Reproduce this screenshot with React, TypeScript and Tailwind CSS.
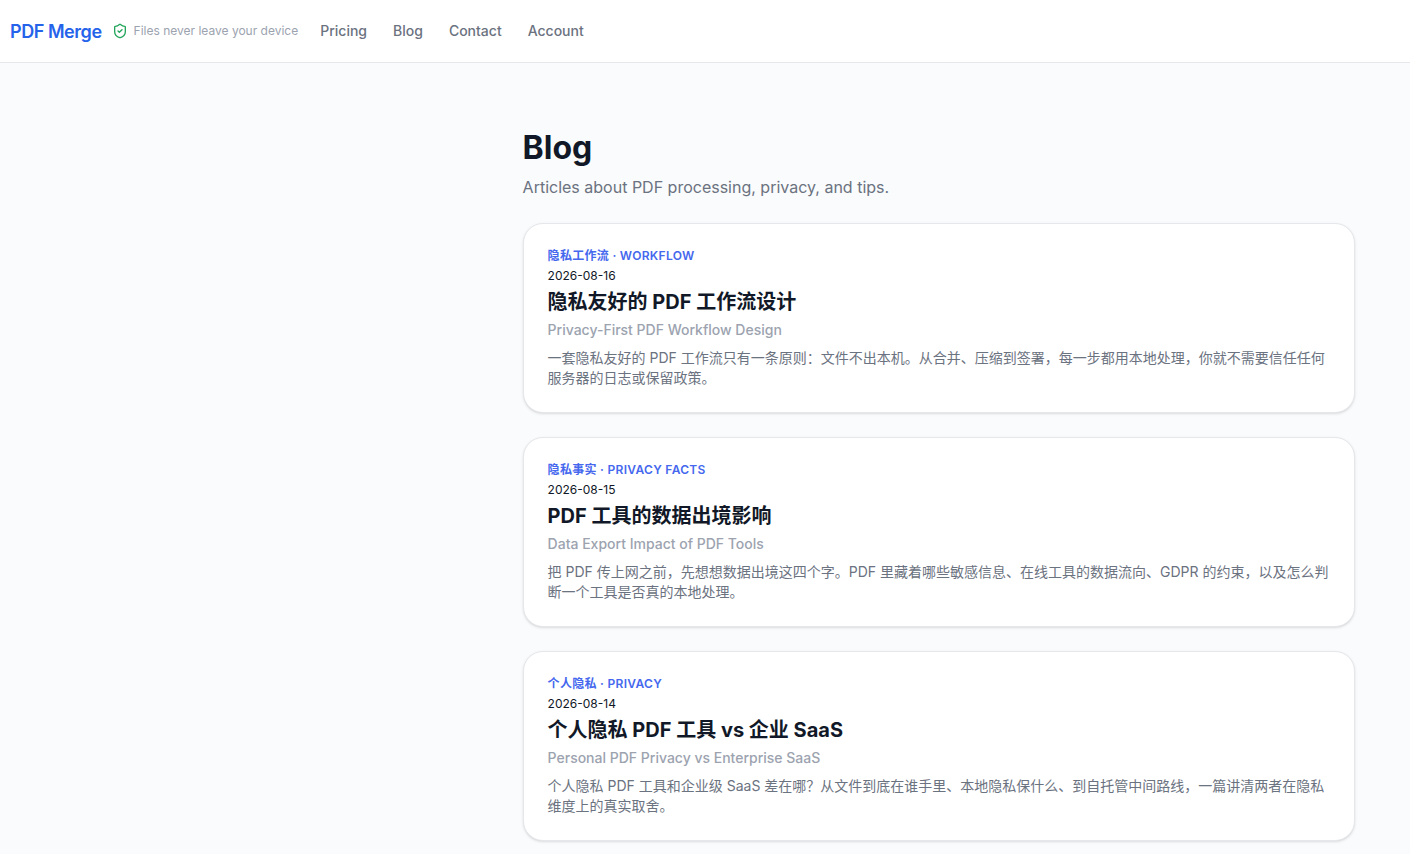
const posts = [
  {
    tag: "隐私工作流 · WORKFLOW",
    date: "2026-08-16",
    title: "隐私友好的 PDF 工作流设计",
    sub: "Privacy-First PDF Workflow Design",
    body: "一套隐私友好的 PDF 工作流只有一条原则：文件不出本机。从合并、压缩到签署，每一步都用本地处理，你就不需要信任任何服务器的日志或保留政策。",
  },
  {
    tag: "隐私事实 · PRIVACY FACTS",
    date: "2026-08-15",
    title: "PDF 工具的数据出境影响",
    sub: "Data Export Impact of PDF Tools",
    body: "把 PDF 传上网之前，先想想数据出境这四个字。PDF 里藏着哪些敏感信息、在线工具的数据流向、GDPR 的约束，以及怎么判断一个工具是否真的本地处理。",
  },
  {
    tag: "个人隐私 · PRIVACY",
    date: "2026-08-14",
    title: "个人隐私 PDF 工具 vs 企业 SaaS",
    sub: "Personal PDF Privacy vs Enterprise SaaS",
    body: "个人隐私 PDF 工具和企业级 SaaS 差在哪？从文件到底在谁手里、本地隐私保什么、到自托管中间路线，一篇讲清两者在隐私维度上的真实取舍。",
  },
];

export default function App() {
  return (
    <div className="h-screen overflow-hidden bg-[#fafbfc] font-['Inter','Noto_Sans_CJK_SC',sans-serif]">
      <header className="flex h-[63px] items-center border-b border-[#e5e7eb] bg-white pl-[10px]">
        <a className="text-[18px] font-semibold tracking-[-0.45px] text-[#2563eb]">PDF Merge</a>
        <div className="ml-[10px] flex items-center gap-[6px]">
          <svg className="h-[16px] w-[16px]" viewBox="0 0 24 24" fill="none" stroke="#22a55b" strokeWidth="2" strokeLinecap="round" strokeLinejoin="round">
            <path d="M20 13c0 5-3.5 7.5-7.66 8.95a1 1 0 0 1-.67-.01C7.5 20.5 4 18 4 13V6a1 1 0 0 1 1-1c2 0 4.5-1.2 6.24-2.72a1.17 1.17 0 0 1 1.52 0C14.51 3.81 17 5 19 5a1 1 0 0 1 1 1z" />
            <path d="m9 12 2 2 4-4" />
          </svg>
          <span className="text-[12px] text-[#9ca3af]">Files never leave your device</span>
        </div>
        <nav className="ml-[22px] -mt-[1px] flex items-center gap-[26px] text-[14px] font-medium text-[#6b7280]">
          <a>Pricing</a>
          <a>Blog</a>
          <a>Contact</a>
          <a>Account</a>
        </nav>
      </header>
      <main className="ml-[522.6px] w-[832px] pt-[65px]">
        <h1 className="text-[32px] leading-[40px] font-bold text-[#111827]">Blog</h1>
        <p className="mt-[7px] text-[16px] leading-[24px] text-[#6b7280]">Articles about PDF processing, privacy, and tips.</p>
        <div className="mt-[24px] flex flex-col gap-[24px]">
          {posts.map((p) => (
            <article key={p.date} className="rounded-[20px] border border-[#e5e7eb] bg-white p-6 shadow-sm">
              <div className="text-[12px] leading-[16px] font-semibold tracking-[0.3px] text-[#4568ee]">{p.tag}</div>
              <div className="mt-[4px] text-[12px] leading-[16px] text-[#111827]">{p.date}</div>
              <h2 className="mt-[4px] text-[20px] leading-[28px] font-bold text-[#111827]">{p.title}</h2>
              <div className="mt-[4px] text-[14px] leading-[20px] font-medium text-[#9ca3af]">{p.sub}</div>
              <p className="mt-[8px] text-[14px] leading-[20px] text-[#6b7280]">{p.body}</p>
            </article>
          ))}
        </div>
      </main>
    </div>
  );
}
